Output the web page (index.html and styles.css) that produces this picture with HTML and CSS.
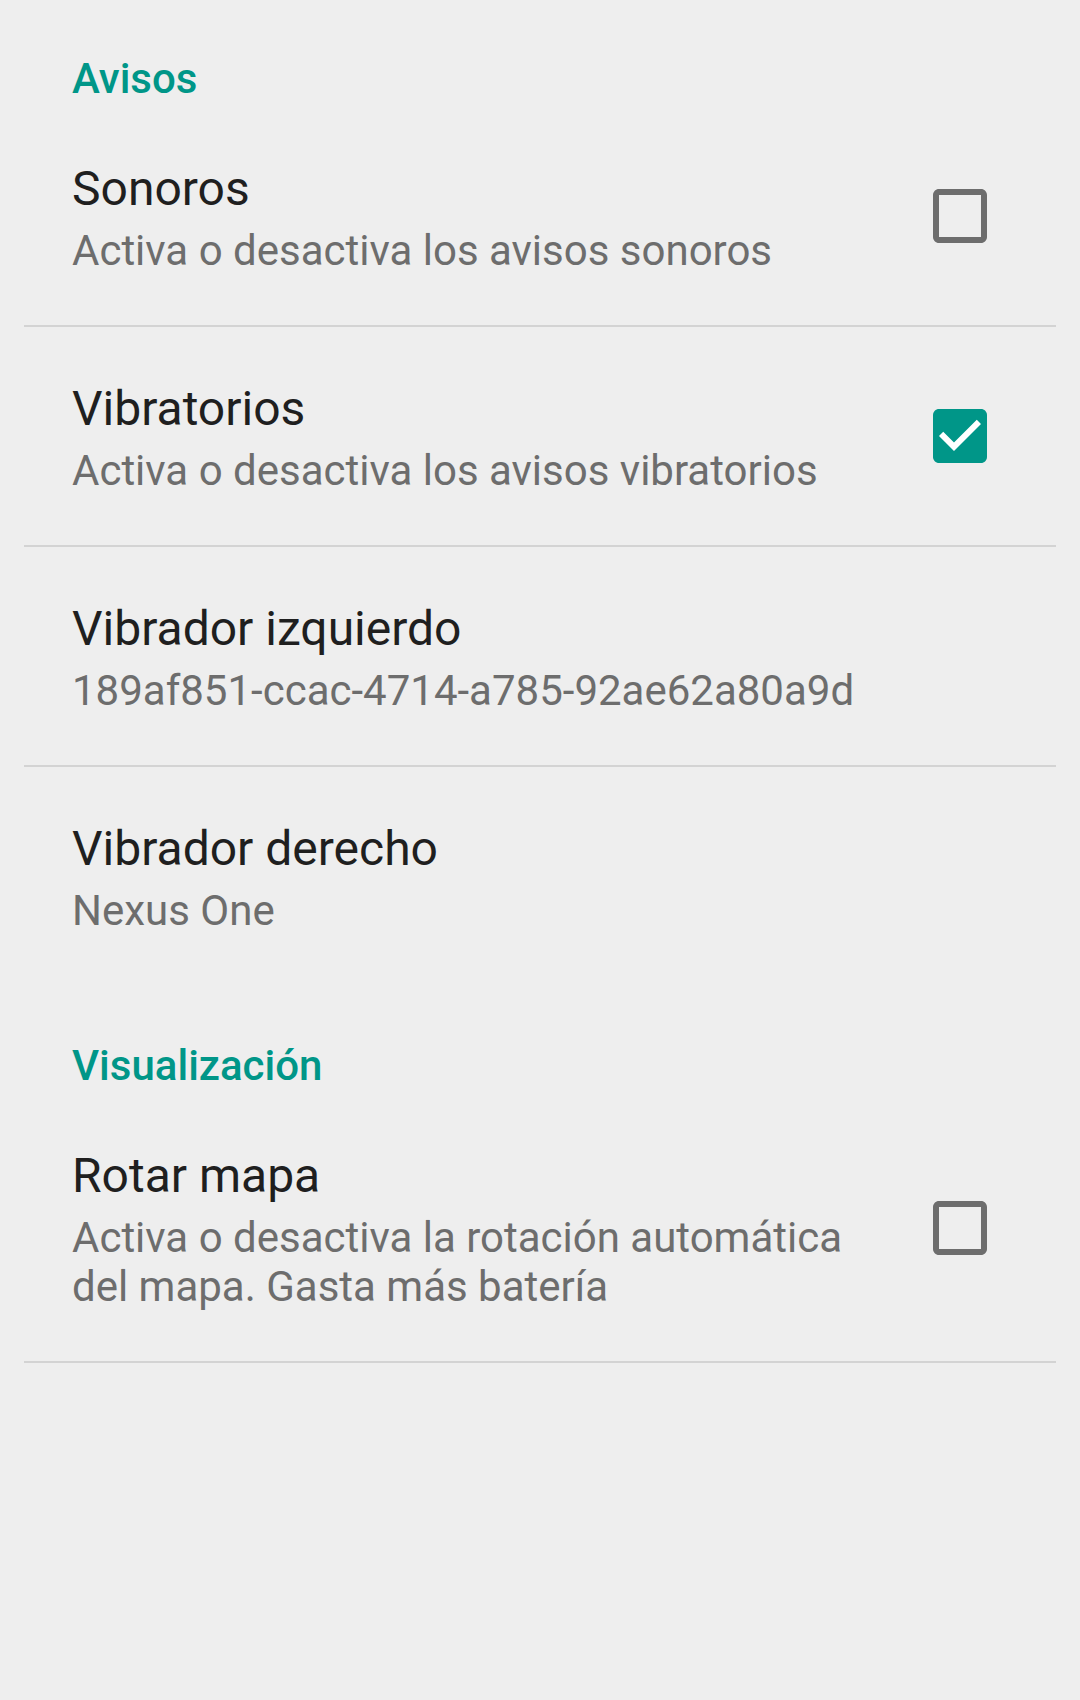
FILE: index.html
```html
<!DOCTYPE html>
<html lang="es">
<head>
<meta charset="utf-8">
<title>Ajustes</title>
<link rel="stylesheet" href="styles.css">
</head>
<body>
<main class="prefs">
  <section class="category">
    <h2 class="category-title">Avisos</h2>
    <div class="item">
      <div class="text">
        <div class="title">Sonoros</div>
        <div class="summary">Activa o desactiva los avisos sonoros</div>
      </div>
      <svg class="checkbox" viewBox="3 3 18 18" width="54" height="54" aria-hidden="true">
        <path fill="#6d6d6d" d="M19 5v14H5V5h14m0-2H5c-1.1 0-2 .9-2 2v14c0 1.1.9 2 2 2h14c1.1 0 2-.9 2-2V5c0-1.1-.9-2-2-2z"/>
      </svg>
    </div>
    <div class="item">
      <div class="text">
        <div class="title">Vibratorios</div>
        <div class="summary">Activa o desactiva los avisos vibratorios</div>
      </div>
      <svg class="checkbox" viewBox="3 3 18 18" width="54" height="54" aria-hidden="true">
        <path fill="#009688" d="M19 3H5c-1.11 0-2 .9-2 2v14c0 1.1.89 2 2 2h14c1.11 0 2-.9 2-2V5c0-1.1-.89-2-2-2z"/>
        <path fill="#ffffff" d="M10 17l-5-5 1.41-1.41L10 14.17l7.59-7.59L19 8l-9 9z"/>
      </svg>
    </div>
    <div class="item">
      <div class="text">
        <div class="title">Vibrador izquierdo</div>
        <div class="summary">189af851-ccac-4714-a785-92ae62a80a9d</div>
      </div>
    </div>
    <div class="item item-last">
      <div class="text">
        <div class="title">Vibrador derecho</div>
        <div class="summary">Nexus One</div>
      </div>
    </div>
  </section>
  <section class="category">
    <h2 class="category-title">Visualización</h2>
    <div class="item">
      <div class="text">
        <div class="title">Rotar mapa</div>
        <div class="summary">Activa o desactiva la rotación automática del mapa. Gasta más batería</div>
      </div>
      <svg class="checkbox" viewBox="3 3 18 18" width="54" height="54" aria-hidden="true">
        <path fill="#6d6d6d" d="M19 5v14H5V5h14m0-2H5c-1.1 0-2 .9-2 2v14c0 1.1.9 2 2 2h14c1.1 0 2-.9 2-2V5c0-1.1-.9-2-2-2z"/>
      </svg>
    </div>
  </section>
</main>
</body>
</html>
```

FILE: styles.css
```css
html, body {
  margin: 0;
  padding: 0;
  background: #eeeeee;
}

body {
  width: 1080px;
  min-height: 1700px;
  font-family: Roboto, "Noto Sans", "Liberation Sans", sans-serif;
}

.prefs {
  display: flex;
  flex-direction: column;
}

.category {
  display: flex;
  flex-direction: column;
}

.category-title {
  margin: 0;
  padding: 54px 72px 3px;
  font-size: 42px;
  line-height: 50px;
  font-weight: 500;
  color: #009688;
}

.item {
  display: flex;
  align-items: center;
  margin: 0 24px;
  padding: 50px 69px 50px 48px;
  border-bottom: 2px solid #d3d3d3;
}

.item-last {
  border-bottom-color: transparent;
}

.text {
  flex: 1;
  min-width: 0;
  margin-right: 48px;
}

.title {
  font-size: 48px;
  line-height: 64px;
  color: #1f1f1f;
}

.summary {
  margin-top: 5px;
  font-size: 42px;
  line-height: 49px;
  color: #6d6d6d;
}

.checkbox {
  flex: none;
  display: block;
  width: 54px;
  height: 54px;
}
```
